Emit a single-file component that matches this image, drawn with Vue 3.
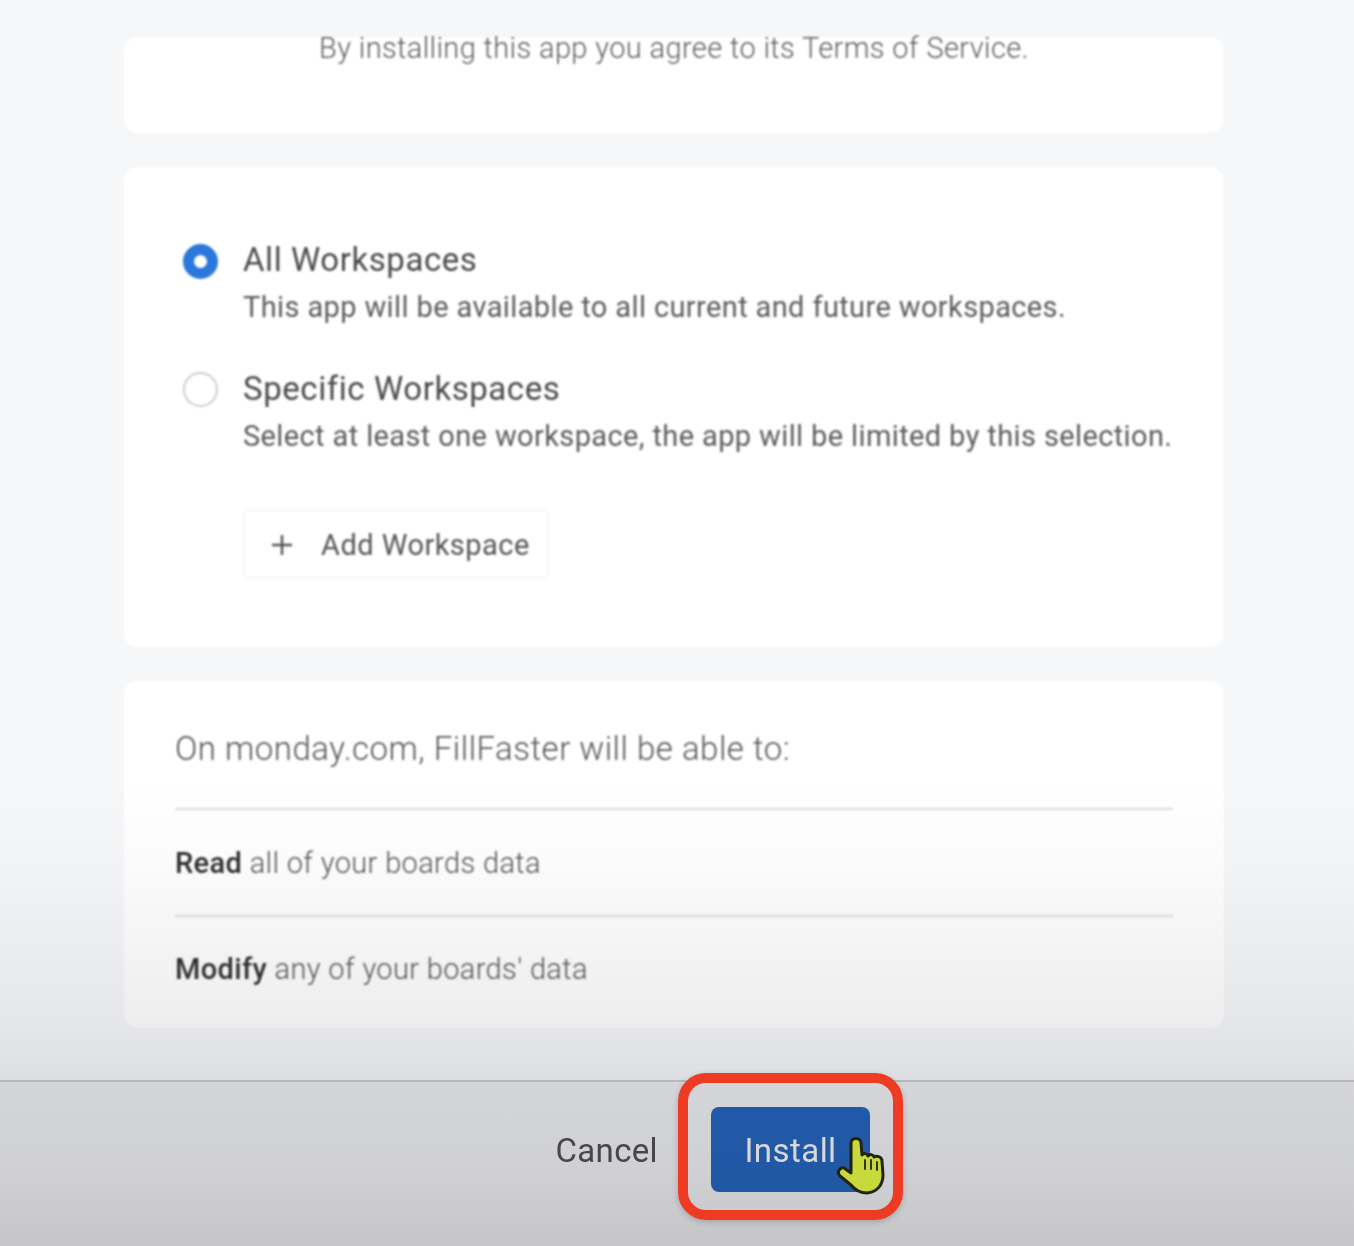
<script setup>
const options = [
  { title: 'All Workspaces', text: 'This app will be available to all current and future workspaces.', checked: true },
  { title: 'Specific Workspaces', text: 'Select at least one workspace, the app will be limited by this selection.', checked: false }
]
const permissions = [
  { verb: 'Read', text: 'all of your boards data' },
  { verb: 'Modify', text: "any of your boards' data" }
]
</script>

<template>
  <div class="page">
    <main class="content">
      <section class="card terms">By installing this app you agree to its Terms of Service.</section>

      <section class="card workspaces">
        <div v-for="o in options" :key="o.title" class="option">
          <span class="radio" :class="{ checked: o.checked }"></span>
          <div>
            <div class="opt-title">{{ o.title }}</div>
            <div class="opt-text">{{ o.text }}</div>
          </div>
        </div>
        <button class="add">
          <svg class="plus" viewBox="0 0 20 20" width="20" height="20"><path d="M10 0v20M0 10h20" stroke="#555" stroke-width="2.4" fill="none"/></svg>
          <span>Add Workspace</span>
        </button>
      </section>

      <section class="card perms">
        <h2 class="perm-head">On monday.com, FillFaster will be able to:</h2>
        <div v-for="p in permissions" :key="p.verb" class="perm"><b>{{ p.verb }}</b> {{ p.text }}</div>
      </section>
    </main>

    <footer class="footer">
      <span class="cancel">Cancel</span>
      <button class="install">Install</button>
    </footer>

    <div class="shade"></div>

    <div class="annotation">
      <span class="frame"></span>
      <svg class="hand" viewBox="0 0 50 60" width="50" height="60">
        <path d="M16 8C16 2 26 2 26 8L27 20C29 18 32 18 33 21C35 19 38 19 39 22C42 20 47 22 47 26L48 40C48 50 42 57 32 58C24 58 20 55 16 50L5 41C1 37 5 32 9 33L16 38Z" fill="#c8d93b" stroke="#23230f" stroke-width="3" stroke-linejoin="round"/>
        <path d="M30 25v9M36 25v9M42 27v8" stroke="#23230f" stroke-width="1.8" fill="none" stroke-linecap="round"/>
      </svg>
    </div>
  </div>
</template>

<style scoped>
.page {
  position: relative;
  width: 1354px;
  height: 1246px;
  overflow: hidden;
  background: #f6f7f9;
  font-family: Roboto, "Liberation Sans", sans-serif;
  color: #4d4d4d;
}
.content {
  display: flex;
  flex-direction: column;
  gap: 34px;
  width: 1100px;
  margin-left: 124px;
  padding-top: 37px;
  height: 1080px;
  box-sizing: border-box;
  filter: blur(0.8px);
}
.card {
  background: #fff;
  border-radius: 14px;
  box-sizing: border-box;
}
.terms {
  height: 96px;
  text-align: center;
  font-size: 29px;
  font-weight: 300;
  line-height: 22px;
  letter-spacing: 0.37px;
  color: #5e5e5e;
}
.workspaces {
  height: 480px;
  padding: 73px 0 0 59px;
}
.option {
  display: flex;
  gap: 25px;
  height: 128px;
}
.radio {
  flex: none;
  width: 35px;
  height: 35px;
  margin-top: 4px;
  box-sizing: border-box;
  border-radius: 50%;
  border: 2.5px solid #cdcdcd;
  background: #fff;
}
.radio.checked {
  border: 11px solid #2b78dc;
}
.opt-title {
  font-size: 33px;
  line-height: 40px;
  letter-spacing: 0.56px;
  color: #4a4a4a;
}
.option + .option .opt-title { margin-top: 1px; }
.opt-text {
  margin-top: 7px;
  font-size: 29px;
  line-height: 40px;
  letter-spacing: 0.38px;
  color: #5c5c5c;
}
.add {
  display: flex;
  align-items: center;
  gap: 29px;
  margin: 14px 0 0 60px;
  width: 306px;
  height: 68px;
  padding: 1px 0 0 28px;
  box-sizing: border-box;
  border: 1px solid #f1f1f1;
  border-radius: 6px;
  background: #fff;
  font: inherit;
  font-size: 29px;
  letter-spacing: 0.46px;
  color: #555;
}
.plus { flex: none; }
.perms {
  height: 347px;
  padding: 0 51px;
}
.perm-head {
  margin: 0;
  height: 129px;
  padding-top: 48px;
  box-sizing: border-box;
  border-bottom: 2px solid #dcdcdc;
  font-size: 33px;
  line-height: 40px;
  font-weight: 300;
  letter-spacing: 0.5px;
  color: #555;
}
.perm {
  height: 105px;
  box-sizing: border-box;
  padding-top: 33px;
  font-size: 29px;
  line-height: 40px;
  font-weight: 300;
  letter-spacing: 0.36px;
  color: #555;
}
.perm + .perm {
  border-top: 2px solid #dcdcdc;
  padding-top: 32px;
}
.perm b {
  font-weight: 500;
  color: #2e2e2e;
}
.footer {
  display: flex;
  justify-content: flex-end;
  align-items: flex-start;
  gap: 53px;
  height: 166px;
  padding: 25px 484px 0 0;
  box-sizing: border-box;
  border-top: 2px solid #cfcfd2;
  filter: blur(0.6px);
}
.cancel {
  margin-top: 1px;
  font-size: 33px;
  line-height: 85px;
  letter-spacing: 0.35px;
  color: #4a4a4a;
}
.install {
  display: block;
  width: 159px;
  height: 85px;
  border: 0;
  border-radius: 8px;
  background: #1a60be;
  color: #fff;
  font: inherit;
  font-size: 33px;
  letter-spacing: 0.45px;
  padding: 1px 0 0;
}
.shade {
  position: absolute;
  inset: 0;
  pointer-events: none;
  background: linear-gradient(to bottom,
    rgba(60, 60, 70, 0) 780px,
    rgba(60, 60, 70, 0.02) 860px,
    rgba(60, 60, 70, 0.09) 1028px,
    rgba(60, 60, 70, 0.13) 1078px,
    rgba(60, 60, 70, 0.18) 1084px,
    rgba(60, 60, 70, 0.21) 1180px,
    rgba(50, 50, 50, 0.25) 1246px);
}
.annotation {
  position: absolute;
  left: 678px;
  top: 1073px;
  width: 225px;
  height: 147px;
  pointer-events: none;
}
.frame {
  position: absolute;
  inset: 0;
  box-sizing: border-box;
  border: 10px solid #ee3c24;
  border-radius: 28px;
  box-shadow: 0 2px 6px rgba(0, 0, 0, 0.2);
}
.hand {
  position: absolute;
  left: 157px;
  top: 62px;
}
</style>
